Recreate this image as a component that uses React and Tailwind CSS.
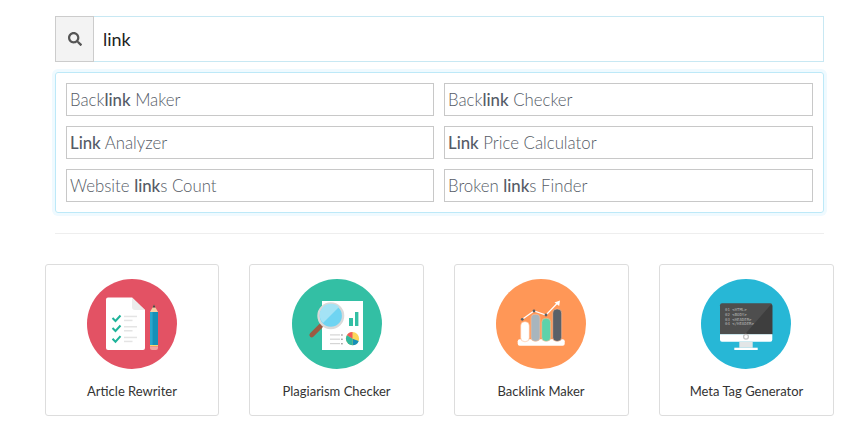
import React from "react";
import { FaSearch } from "react-icons/fa";

const font = "font-['Lato','Noto_Sans',sans-serif]";

const suggestions = [
  ["Back", "link", " Maker"],
  ["Back", "link", " Checker"],
  ["", "Link", " Analyzer"],
  ["", "Link", " Price Calculator"],
  ["Website ", "link", "s Count"],
  ["Broken ", "link", "s Finder"],
];

function ArticleIcon() {
  const rows = [
    { check: 36, line: 36.7 },
    { check: 46, line: 47 },
    { check: 56.7, line: 57.7 },
  ];
  return (
    <svg viewBox="0 0 90 90" className="w-[90px] h-[90px]">
      <circle cx="45" cy="45" r="45" fill="#e35264" />
      <path d="M19 20.5a2 2 0 0 1 2-2h24L58 31v38a2 2 0 0 1-2 2H21a2 2 0 0 1-2-2z" fill="#fff" />
      <path d="M45 18.5L58 31H48a3 3 0 0 1-3-3z" fill="#ececec" />
      {rows.map((r) => (
        <g key={r.check}>
          <path d={`M25.5 ${r.check + 3}l3 3 5-5.5`} fill="none" stroke="#1fb39a" strokeWidth="2" />
          <rect x="37" y={r.line} width="13" height="1.5" fill="#e4e4e4" />
          <rect x="37" y={r.line + 4} width="8.5" height="1.5" fill="#e4e4e4" />
        </g>
      ))}
      <path d="M63 33l4-7 4 7z" fill="#f5cfa5" />
      <path d="M65.6 28.5l1.4-3 1.4 3z" fill="#3d3d3d" />
      <rect x="63" y="33" width="8" height="33" fill="#1690b8" />
      <rect x="63" y="33" width="2.6" height="33" fill="#2aa6cc" />
      <rect x="63" y="66" width="8" height="1.4" fill="#f5d76a" />
      <path d="M63 67.4h8V69a2 2 0 0 1-2 2h-4a2 2 0 0 1-2-2z" fill="#f2a3a0" />
    </svg>
  );
}

function PlagiarismIcon() {
  return (
    <svg viewBox="0 0 90 90" className="w-[90px] h-[90px]">
      <circle cx="45" cy="45" r="45" fill="#33bfa4" />
      <rect x="30" y="22" width="41" height="49" fill="#fff" />
      <rect x="57" y="39" width="4" height="8" fill="#33bfa4" />
      <rect x="63" y="33" width="3.4" height="14" fill="#33bfa4" />
      {[55.3, 59.6, 64].map((y) => (
        <g key={y}>
          <rect x="38" y={y} width="10" height="1.2" fill="#d5d5d5" />
          <rect x="49" y={y} width="1.8" height="1.4" fill="#a8a8a8" />
        </g>
      ))}
      <circle cx="60.5" cy="59.7" r="6.6" fill="#fbd75b" />
      <path d="M60.5 59.7l-5.6-3.4a6.6 6.6 0 0 1 5.6-3.2z" fill="#ee5a5f" />
      <path d="M60.5 59.7l6.2 2.2a6.6 6.6 0 0 1-6.2 4.4z" fill="#1690b8" />
      <path d="M60.5 59.7v6.6a6.6 6.6 0 0 1-6.6-6.6 6.6 6.6 0 0 1 1-3.4z" fill="#30b8a0" />
      <path d="M19.7 56l9-9" stroke="#9c5a42" strokeWidth="4.6" strokeLinecap="round" />
      <circle cx="38.8" cy="36.7" r="12.3" fill="#6fd4f2" stroke="#d9d9d9" strokeWidth="2.4" />
      <path d="M31 44a11 11 0 0 1 16-16z" fill="#a4e3f5" />
    </svg>
  );
}

function BacklinkIcon() {
  return (
    <svg viewBox="0 0 90 90" className="w-[90px] h-[90px]">
      <circle cx="45" cy="45" r="45" fill="#ff9757" />
      <rect x="21.7" y="60.3" width="47" height="6.4" rx="2" fill="#fff" />
      <rect x="24.7" y="42.7" width="8.6" height="20" rx="4" fill="#fff" stroke="#ffbe96" strokeWidth="0.6" />
      <rect x="35" y="35.3" width="9" height="27" rx="4" fill="#a8b5bd" stroke="#ffbe96" strokeWidth="0.6" />
      <rect x="45.7" y="39.3" width="9" height="23" rx="4" fill="#5ed2aa" stroke="#ffbe96" strokeWidth="0.6" />
      <rect x="56.7" y="30" width="9" height="32.3" rx="4" fill="#5a6068" stroke="#ffbe96" strokeWidth="0.6" />
      <path d="M26.3 40.3L38 32l12 4 12-12.5" fill="none" stroke="#fff" strokeWidth="1.2" />
      <path d="M58.5 23.5l5.5-2-.8 5.6z" fill="#fff" />
      <circle cx="26.3" cy="40.3" r="1.4" fill="#5a6068" />
      <circle cx="38" cy="32" r="1.4" fill="#5a6068" />
      <circle cx="50" cy="36" r="1.4" fill="#5a6068" />
    </svg>
  );
}

function MetaIcon() {
  return (
    <svg viewBox="0 0 90 90" className="w-[90px] h-[90px]">
      <circle cx="45" cy="45" r="45" fill="#27b7d6" />
      <path d="M19 26.3a2 2 0 0 1 2-2h48.3a2 2 0 0 1 2 2v29H19z" fill="#4e4e4e" />
      <path d="M70 25.5L44 55.3h27.3V27z" fill="#3e3e3e" />
      <path d="M19 55.3h52.3v5.4a2 2 0 0 1-2 2H21a2 2 0 0 1-2-2z" fill="#fff" />
      <circle cx="45" cy="57.7" r="2.4" fill="#fff" stroke="#c4c4c4" strokeWidth="1.3" />
      <rect x="38.3" y="62.7" width="13.4" height="6" fill="#e2e6e7" />
      <rect x="33.3" y="68.7" width="23.4" height="2.3" fill="#fff" />
      <g fill="#b5b5b5" fontSize="4" fontFamily="'DejaVu Sans Mono', monospace">
        <text x="24" y="32">01 &lt;HTML&gt;</text>
        <text x="24" y="36.8">02 &lt;BODY&gt;</text>
        <text x="24" y="41.5">03 &lt;HEADER&gt;</text>
        <text x="24" y="46.3">04 &lt;/HEADER&gt;</text>
      </g>
    </svg>
  );
}

const tools = [
  { name: "Article Rewriter", icon: <ArticleIcon />, iconClass: "", labelClass: "" },
  { name: "Plagiarism Checker", icon: <PlagiarismIcon />, iconClass: "", labelClass: "" },
  { name: "Backlink Maker", icon: <BacklinkIcon />, iconClass: "mr-px", labelClass: "mr-px" },
  { name: "Meta Tag Generator", icon: <MetaIcon />, iconClass: "mr-px", labelClass: "" },
];

export default function App() {
  return (
    <div className={`${font} bg-white min-h-screen pt-4`}>
      <div className="ml-[55px] w-[769px]">
        <div className="flex h-[46px]">
          <div className="w-[39px] flex items-center justify-center bg-[#f3f3f3] border border-[#cccccc]">
            <FaSearch className="w-[14px] h-[14px] text-[#555555]" />
          </div>
          <div className="flex-1 flex items-center pl-[9px] border border-l-0 border-[#c8e8f3] text-[18px] text-[#222222]">
            link
          </div>
        </div>

        <div className="mt-[10px] h-[141px] p-[10px] border border-[#bde9f8] rounded-[3px] shadow-[0_0_0_3px_#effaff]">
          <div className="grid grid-cols-[368px_369px] gap-[10px]">
            {suggestions.map(([before, match, after]) => (
              <div
                key={before + match + after}
                className="h-[33px] flex items-center whitespace-pre pl-[3px] border border-[#c8c8c8] text-[16.8px] font-light text-[#555b66]"
              >
                {before}
                <span className="font-medium">{match}</span>
                {after}
              </div>
            ))}
          </div>
        </div>

        <div className="mt-5 border-t border-[#eeeeee]" />
      </div>

      <div className="ml-[45px] w-[789px] mt-[30px] grid grid-cols-[174px_175px_175px_175px] gap-[30px]">
        {tools.map((tool) => (
          <div
            key={tool.name}
            className="h-[152px] pt-[14px] flex flex-col items-center border border-[#dddddd] rounded-[3px]"
          >
            <div className={tool.iconClass}>{tool.icon}</div>
            <div className={`mt-[13px] text-[13px] text-[#333333] ${tool.labelClass}`}>{tool.name}</div>
          </div>
        ))}
      </div>
    </div>
  );
}
